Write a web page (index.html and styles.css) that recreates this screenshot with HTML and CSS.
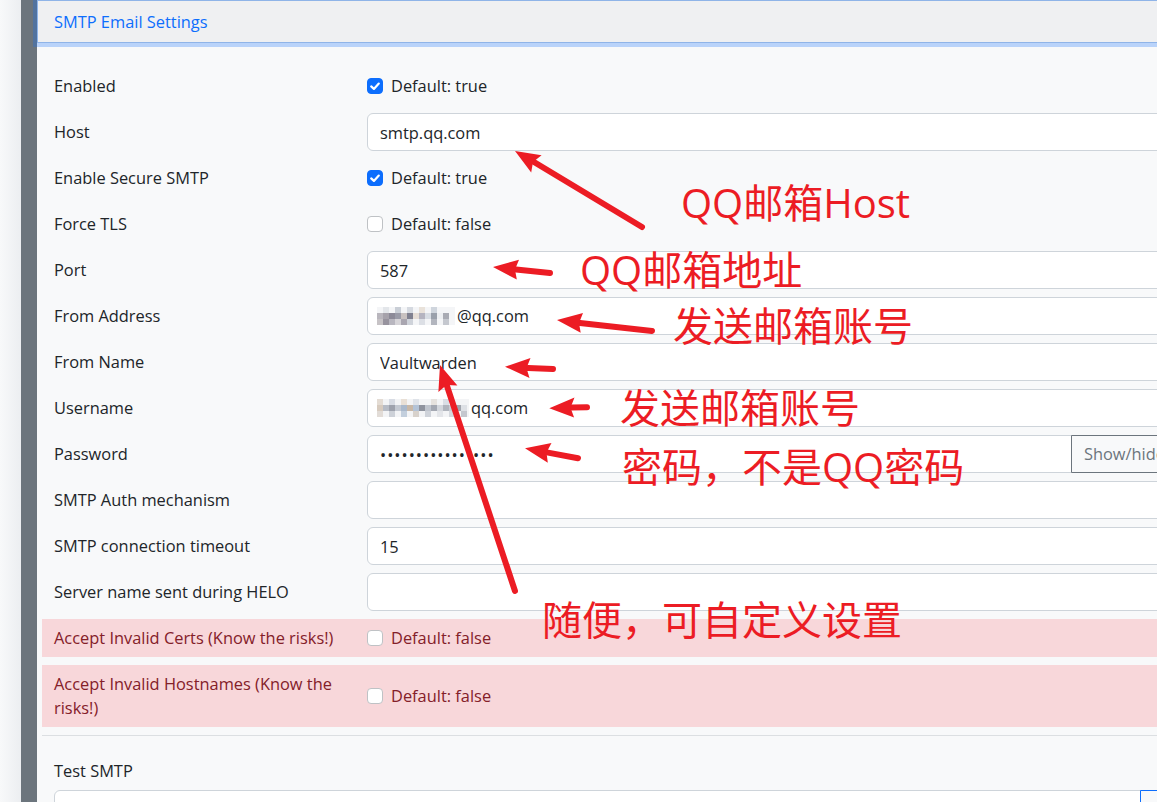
FILE: index.html
```html
<!DOCTYPE html>
<html lang="en">
<head>
<meta charset="utf-8">
<title>SMTP Email Settings</title>
<link rel="stylesheet" href="styles.css">
</head>
<body>
<div class="screen">
  <div class="rail-light"></div>
  <div class="rail-dark"></div>
  <section class="card">
    <header class="card-header">SMTP Email Settings</header>
    <div class="card-body">
      <div class="form-row">
        <div class="form-label">Enabled</div>
        <div class="form-field"><span class="check on"><svg viewBox="0 0 16 16" width="16" height="16"><path d="M4.2 8.4 L6.9 10.9 L11.8 5.6" fill="none" stroke="#fff" stroke-width="2.2" stroke-linecap="round" stroke-linejoin="round"/></svg></span><span class="check-text">Default: true</span></div>
      </div>
      <div class="form-row">
        <div class="form-label">Host</div>
        <div class="form-field"><input class="form-control" type="text" value="smtp.qq.com"></div>
      </div>
      <div class="form-row">
        <div class="form-label">Enable Secure SMTP</div>
        <div class="form-field"><span class="check on"><svg viewBox="0 0 16 16" width="16" height="16"><path d="M4.2 8.4 L6.9 10.9 L11.8 5.6" fill="none" stroke="#fff" stroke-width="2.2" stroke-linecap="round" stroke-linejoin="round"/></svg></span><span class="check-text">Default: true</span></div>
      </div>
      <div class="form-row">
        <div class="form-label">Force TLS</div>
        <div class="form-field"><span class="check"></span><span class="check-text">Default: false</span></div>
      </div>
      <div class="form-row">
        <div class="form-label">Port</div>
        <div class="form-field"><input class="form-control" type="text" value="587"></div>
      </div>
      <div class="form-row">
        <div class="form-label">From Address</div>
        <div class="form-field"><div class="form-control mosaic-field">
          <svg class="mosaic" width="78" height="18" viewBox="0 0 78 18">
            <rect x="0" y="0" width="78" height="18" fill="#f4f5f7"/>
            <rect x="6" y="0" width="6" height="6" fill="#e3e6ea"/><rect x="18" y="0" width="6" height="6" fill="#c9ced6"/><rect x="30" y="0" width="6" height="6" fill="#d5d9e0"/><rect x="42" y="0" width="6" height="6" fill="#e9e2da"/><rect x="54" y="0" width="6" height="6" fill="#cfd5dd"/>
            <rect x="0" y="6" width="6" height="6" fill="#b9b6bd"/><rect x="6" y="6" width="6" height="6" fill="#a6a2ab"/><rect x="12" y="6" width="6" height="6" fill="#8c8a98"/><rect x="18" y="6" width="6" height="6" fill="#9a9ba8"/><rect x="24" y="6" width="6" height="6" fill="#c8c1c0"/><rect x="30" y="6" width="6" height="6" fill="#7f8090"/><rect x="36" y="6" width="6" height="6" fill="#e5ddd6"/><rect x="42" y="6" width="6" height="6" fill="#b5b4c0"/><rect x="48" y="6" width="6" height="6" fill="#d8dde4"/><rect x="54" y="6" width="6" height="6" fill="#9aa0ab"/><rect x="60" y="6" width="6" height="6" fill="#edeff2"/><rect x="66" y="6" width="6" height="6" fill="#a9abb4"/>
            <rect x="0" y="12" width="6" height="6" fill="#c7c3c6"/><rect x="6" y="12" width="6" height="6" fill="#97939e"/><rect x="12" y="12" width="6" height="6" fill="#b8b6bf"/><rect x="18" y="12" width="6" height="6" fill="#d6d4d8"/><rect x="24" y="12" width="6" height="6" fill="#a9a6b0"/><rect x="30" y="12" width="6" height="6" fill="#cfd3da"/><rect x="42" y="12" width="6" height="6" fill="#dcdfe5"/><rect x="54" y="12" width="6" height="6" fill="#b2b5be"/><rect x="66" y="12" width="6" height="6" fill="#c5c8cf"/>
          </svg><span>@qq.com</span></div></div>
      </div>
      <div class="form-row">
        <div class="form-label">From Name</div>
        <div class="form-field"><input class="form-control" type="text" value="Vaultwarden"></div>
      </div>
      <div class="form-row">
        <div class="form-label">Username</div>
        <div class="form-field"><div class="form-control mosaic-field">
          <svg class="mosaic" width="92" height="18" viewBox="0 0 92 18">
            <rect x="0" y="0" width="92" height="18" fill="#f3f4f6"/>
            <rect x="0" y="0" width="6" height="6" fill="#e4dcd4"/><rect x="12" y="0" width="6" height="6" fill="#d8dce4"/><rect x="24" y="0" width="6" height="6" fill="#e9e0d6"/><rect x="36" y="0" width="6" height="6" fill="#dfe3e9"/><rect x="54" y="0" width="6" height="6" fill="#e6e2de"/><rect x="66" y="0" width="6" height="6" fill="#dadee5"/>
            <rect x="0" y="6" width="6" height="6" fill="#d7cbbf"/><rect x="6" y="6" width="6" height="6" fill="#b7bcc6"/><rect x="12" y="6" width="6" height="6" fill="#9ea2ad"/><rect x="18" y="6" width="6" height="6" fill="#c4c9d2"/><rect x="24" y="6" width="6" height="6" fill="#aab9cc"/><rect x="30" y="6" width="6" height="6" fill="#c8b8a8"/><rect x="36" y="6" width="6" height="6" fill="#b3c3d7"/><rect x="42" y="6" width="6" height="6" fill="#8f939e"/><rect x="48" y="6" width="6" height="6" fill="#c0c5ce"/><rect x="54" y="6" width="6" height="6" fill="#a4a8b2"/><rect x="60" y="6" width="6" height="6" fill="#d3d6dc"/><rect x="66" y="6" width="6" height="6" fill="#b0b4bd"/><rect x="72" y="6" width="6" height="6" fill="#c9ccd3"/><rect x="78" y="6" width="6" height="6" fill="#9fa3ac"/><rect x="84" y="6" width="6" height="6" fill="#dde0e5"/>
            <rect x="0" y="12" width="6" height="6" fill="#e2dcd7"/><rect x="12" y="12" width="6" height="6" fill="#cdd1d8"/><rect x="24" y="12" width="6" height="6" fill="#c3cfdd"/><rect x="36" y="12" width="6" height="6" fill="#d8d2cc"/><rect x="48" y="12" width="6" height="6" fill="#cfd3da"/><rect x="60" y="12" width="6" height="6" fill="#e3e5e9"/><rect x="72" y="12" width="6" height="6" fill="#d5d8de"/><rect x="84" y="12" width="6" height="6" fill="#c4c7ce"/>
          </svg><span>qq.com</span></div></div>
      </div>
      <div class="form-row">
        <div class="form-label">Password</div>
        <div class="form-field input-group">
          <input class="form-control group-input password" type="password" value="abcdefghijklmnop">
          <button class="btn-secondary-outline" type="button">Show/hide</button>
        </div>
      </div>
      <div class="form-row">
        <div class="form-label">SMTP Auth mechanism</div>
        <div class="form-field"><input class="form-control" type="text" value=""></div>
      </div>
      <div class="form-row">
        <div class="form-label">SMTP connection timeout</div>
        <div class="form-field"><input class="form-control" type="text" value="15"></div>
      </div>
      <div class="form-row">
        <div class="form-label">Server name sent during HELO</div>
        <div class="form-field"><input class="form-control" type="text" value=""></div>
      </div>
      <div class="form-row danger">
        <div class="form-label">Accept Invalid Certs (Know the risks!)</div>
        <div class="form-field"><span class="check"></span><span class="check-text">Default: false</span></div>
      </div>
      <div class="form-row danger">
        <div class="form-label">Accept Invalid Hostnames (Know the risks!)</div>
        <div class="form-field"><span class="check"></span><span class="check-text">Default: false</span></div>
      </div>
      <hr class="divider">
      <div class="test-section">
        <div class="test-label">Test SMTP</div>
        <div class="input-group test-group">
          <input class="form-control test-input" type="text" value="">
          <button class="btn-primary-outline" type="button">Send test email</button>
        </div>
      </div>
    </div>
  </section>

  <div class="annotations">
    <svg class="arrows" width="1157" height="802" viewBox="0 0 1157 802">
      <g stroke="#ec1c24" stroke-width="6" stroke-linecap="round" fill="none">
        <line x1="642" y1="227" x2="534" y2="162"/>
        <line x1="550" y1="273" x2="516" y2="269.5"/>
        <line x1="652" y1="331" x2="580" y2="323"/>
        <line x1="553" y1="369" x2="528" y2="368"/>
        <line x1="587" y1="407.3" x2="572" y2="407.6"/>
        <line x1="578" y1="458.3" x2="548" y2="452.6"/>
        <line x1="515" y1="591" x2="447" y2="386"/>
      </g>
      <g fill="#ec1c24">
        <polygon points="515,151 541.6,155.3 533,162 531.2,172.5"/>
        <polygon points="493,267 519,259.7 515,269.5 516.8,279.6"/>
        <polygon points="557,320 583,313 579,323 580.7,332.8"/>
        <polygon points="505,366.7 530.5,357.9 526.5,368 529.5,377.9"/>
        <polygon points="549.3,408.3 574.5,397.6 570.5,407.8 574.1,417.6"/>
        <polygon points="525,448.3 551.5,443.1 546.5,452.5 547.8,462.7"/>
        <polygon points="440,365 457.4,385.6 446.5,385 438.4,391.9"/>
      </g>
    </svg>
    <div class="note note-host">QQ邮箱Host</div>
    <div class="note note-port">QQ邮箱地址</div>
    <div class="note note-from">发送邮箱账号</div>
    <div class="note note-user">发送邮箱账号</div>
    <div class="note note-pass">密码，不是QQ密码</div>
    <div class="note note-name">随便，可自定义设置</div>
  </div>
</div>
</body>
</html>
```

FILE: styles.css
```css
html, body {
  margin: 0;
  padding: 0;
  width: 1157px;
  height: 802px;
  overflow: hidden;
}

body {
  font-family: "Open Sans", "Noto Sans", sans-serif;
  font-size: 16.4px;
  line-height: 24px;
  color: #212529;
  background: #f8f9fa;
}

.screen {
  position: relative;
  display: flex;
  width: 1157px;
  height: 802px;
  overflow: hidden;
}

.rail-light {
  flex: 0 0 21px;
  background: linear-gradient(to right, #f8f9fa, #eceef1);
}

.rail-dark {
  flex: 0 0 16px;
  background: #6c757d;
}

.card {
  flex: 0 0 1158px;
  width: 1158px;
  background: #f8f9fa;
  position: relative;
}

.card-header {
  position: relative;
  z-index: 2;
  box-sizing: border-box;
  height: 43px;
  line-height: 41px;
  padding: 0 0 0 16px;
  color: #0d6efd;
  background: #eff0f2;
  border: 1px solid #8fb4e8;
  box-shadow: 0 0 0 4px rgba(13, 110, 253, 0.27);
}

.card-body {
  padding: 24px 5px 0 5px;
}

.form-row {
  display: flex;
  align-items: center;
  min-height: 38px;
  padding: 0 12px;
  margin-bottom: 8px;
}

.form-row.danger {
  background: #f8d7da;
  color: #842029;
  padding-top: 7px;
  padding-bottom: 7px;
  min-height: 24px;
}

.form-label {
  flex: 0 0 313px;
  box-sizing: border-box;
  padding-right: 12px;
}

.form-field {
  flex: 1 1 0;
  display: flex;
  align-items: center;
  min-width: 0;
}

.form-control {
  box-sizing: border-box;
  width: 100%;
  min-width: 0;
  height: 38px;
  padding: 6px 12px;
  font: inherit;
  color: #212529;
  background: #fff;
  border: 1px solid #ced4da;
  border-radius: 6px;
  outline: none;
}

.form-control.password {
  letter-spacing: 1px;
}

.mosaic-field {
  display: flex;
  align-items: center;
  padding-left: 9px;
}

.mosaic {
  display: block;
  margin-right: 2px;
}

.check {
  box-sizing: border-box;
  width: 16px;
  height: 16px;
  border: 1px solid #bfc2c5;
  border-radius: 4px;
  background: #fff;
  display: inline-flex;
  flex: 0 0 16px;
}

.check.on {
  background: #0d6efd;
  border-color: #0d6efd;
}

.check.on svg {
  margin: -1px;
}

.check-text {
  margin-left: 8px;
}

.input-group {
  display: flex;
  align-items: stretch;
}

.input-group > .form-control {
  flex: 1 1 auto;
  width: 1%;
  min-width: 0;
  border-top-right-radius: 0;
  border-bottom-right-radius: 0;
}

.btn-secondary-outline,
.btn-primary-outline {
  flex: 0 0 auto;
  box-sizing: border-box;
  font: inherit;
  line-height: 24px;
  height: 38px;
  padding: 6px 12px;
  margin: 0 0 0 -1px;
  background: transparent;
  border-radius: 0 6px 6px 0;
  white-space: nowrap;
}

.btn-secondary-outline {
  color: #6c757d;
  border: 1px solid #6c757d;
}

.btn-primary-outline {
  color: #0d6efd;
  border: 1px solid #0d6efd;
}

.divider {
  margin: 0 0 23px 0;
  border: 0;
  border-top: 1px solid #dcdfe2;
}

.test-section {
  padding: 0 12px;
}

.test-label {
  margin-bottom: 7px;
}

.test-group {
  width: 1250px;
}

.test-group > .test-input {
  flex: 0 0 1087px;
}

.annotations {
  position: absolute;
  left: 0;
  top: 0;
  width: 1157px;
  height: 802px;
  pointer-events: none;
  z-index: 5;
}

.arrows {
  position: absolute;
  left: 0;
  top: 0;
}

.note {
  position: absolute;
  font-family: "Open Sans", "Noto Sans CJK SC", sans-serif;
  font-size: 40px;
  line-height: 40px;
  color: #ec1c24;
  white-space: nowrap;
}

.note-host { left: 681px; top: 183px; }
.note-port { left: 580px; top: 250px; }
.note-from { left: 673px; top: 306px; }
.note-user { left: 620px; top: 388px; }
.note-pass { left: 622px; top: 447px; }
.note-name { left: 542px; top: 600px; }
```
